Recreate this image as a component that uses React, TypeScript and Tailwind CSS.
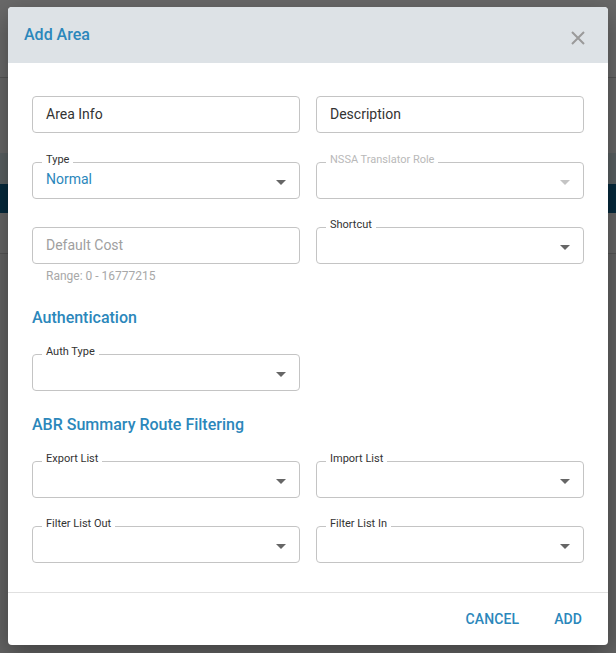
const blue = "text-[#2b87bb]";

function Arrow({ muted }: { muted?: boolean }) {
  return (
    <svg width="10" height="5" viewBox="0 0 10 5" className="absolute right-[13px] top-[17px]">
      <path d="M0 0 L10 0 L5 5 Z" fill={muted ? "#c4c4c4" : "#666666"} />
    </svg>
  );
}

function TextField({ placeholder, dark }: { placeholder: string; dark?: boolean }) {
  return (
    <div className="flex h-[37px] items-center rounded-[4px] border border-[#c4c4c4] px-[13px]">
      <span className={`text-[14px] ${dark ? "text-[#333333]" : "text-[#a0a0a0]"}`}>{placeholder}</span>
    </div>
  );
}

function SelectField({ label, value, disabled }: { label: string; value?: string; disabled?: boolean }) {
  return (
    <div className="relative h-[37px] rounded-[4px] border border-[#c4c4c4]">
      <span
        className={`absolute left-[9px] top-[-10px] bg-white px-[4px] text-[11px] leading-[13px] ${
          disabled ? "text-[#b9b9b9]" : "text-[#333333]"
        }`}
      >
        {label}
      </span>
      {value && <span className={`absolute left-[13px] top-[6px] text-[14px] leading-[20px] ${blue}`}>{value}</span>}
      <Arrow muted={disabled} />
    </div>
  );
}

function Heading({ children }: { children: string }) {
  return <h3 className={`text-[16px] font-medium leading-[20px] ${blue}`}>{children}</h3>;
}

export default function App() {
  return (
    <div className="relative h-[653px] w-[616px] overflow-hidden bg-[#636363] font-['Roboto',sans-serif]">
      {/* dimmed page behind the modal */}
      <div className="h-[77px] bg-[#696969]" />
      <div className="h-px bg-[#555555]" />
      <div className="h-[75px] bg-[#676767]" />
      <div className="h-[31px] bg-[#5a6062]" />
      <div className="h-[29px] bg-[#062a3d]" />
      <div className="h-[40px] bg-[#666666]" />
      <div className="h-px bg-[#555555]" />

      <div className="absolute left-[8px] top-[7px] flex h-[638px] w-[600px] flex-col overflow-hidden rounded-[4px] bg-white shadow-[0_8px_24px_rgba(0,0,0,0.35)]">
        <div className="flex h-[56px] shrink-0 items-center justify-between bg-[#dde2e6] pl-[16px] pr-[23px]">
          <h2 className={`text-[16px] font-medium ${blue}`}>Add Area</h2>
          <svg width="14" height="14" viewBox="0 0 14 14" className="mt-[6px]">
            <path d="M1 1 L13 13 M13 1 L1 13" stroke="#9a9a9a" strokeWidth="2" />
          </svg>
        </div>

        <div className="flex-1 px-[24px] pt-[33px]">
          <div className="grid grid-cols-2 gap-x-[16px]">
            <TextField placeholder="Area Info" dark />
            <TextField placeholder="Description" dark />
          </div>
          <div className="mt-[29px] grid grid-cols-2 gap-x-[16px]">
            <SelectField label="Type" value="Normal" />
            <SelectField label="NSSA Translator Role" disabled />
          </div>
          <div className="mt-[28px] grid grid-cols-2 gap-x-[16px]">
            <div>
              <TextField placeholder="Default Cost" />
              <p className="mt-[5px] pl-[14px] text-[12px] leading-[14px] text-[#a8a8a8]">Range: 0 - 16777215</p>
            </div>
            <SelectField label="Shortcut" />
          </div>

          <div className="mt-[25px]">
            <Heading>Authentication</Heading>
          </div>
          <div className="mt-[26px] grid grid-cols-2 gap-x-[16px]">
            <SelectField label="Auth Type" />
          </div>

          <div className="mt-[24px]">
            <Heading>ABR Summary Route Filtering</Heading>
          </div>
          <div className="mt-[26px] grid grid-cols-2 gap-x-[16px]">
            <SelectField label="Export List" />
            <SelectField label="Import List" />
          </div>
          <div className="mt-[28px] grid grid-cols-2 gap-x-[16px]">
            <SelectField label="Filter List Out" />
            <SelectField label="Filter List In" />
          </div>
        </div>

        <div className="flex h-[53px] shrink-0 items-center justify-end gap-[19px] border-t border-[#e0e0e0] pr-[18px]">
          <button className={`px-[8px] py-[6px] text-[14px] font-medium tracking-[0.1px] ${blue}`}>CANCEL</button>
          <button className={`px-[8px] py-[6px] text-[14px] font-medium tracking-[0.1px] ${blue}`}>ADD</button>
        </div>
      </div>
    </div>
  );
}
